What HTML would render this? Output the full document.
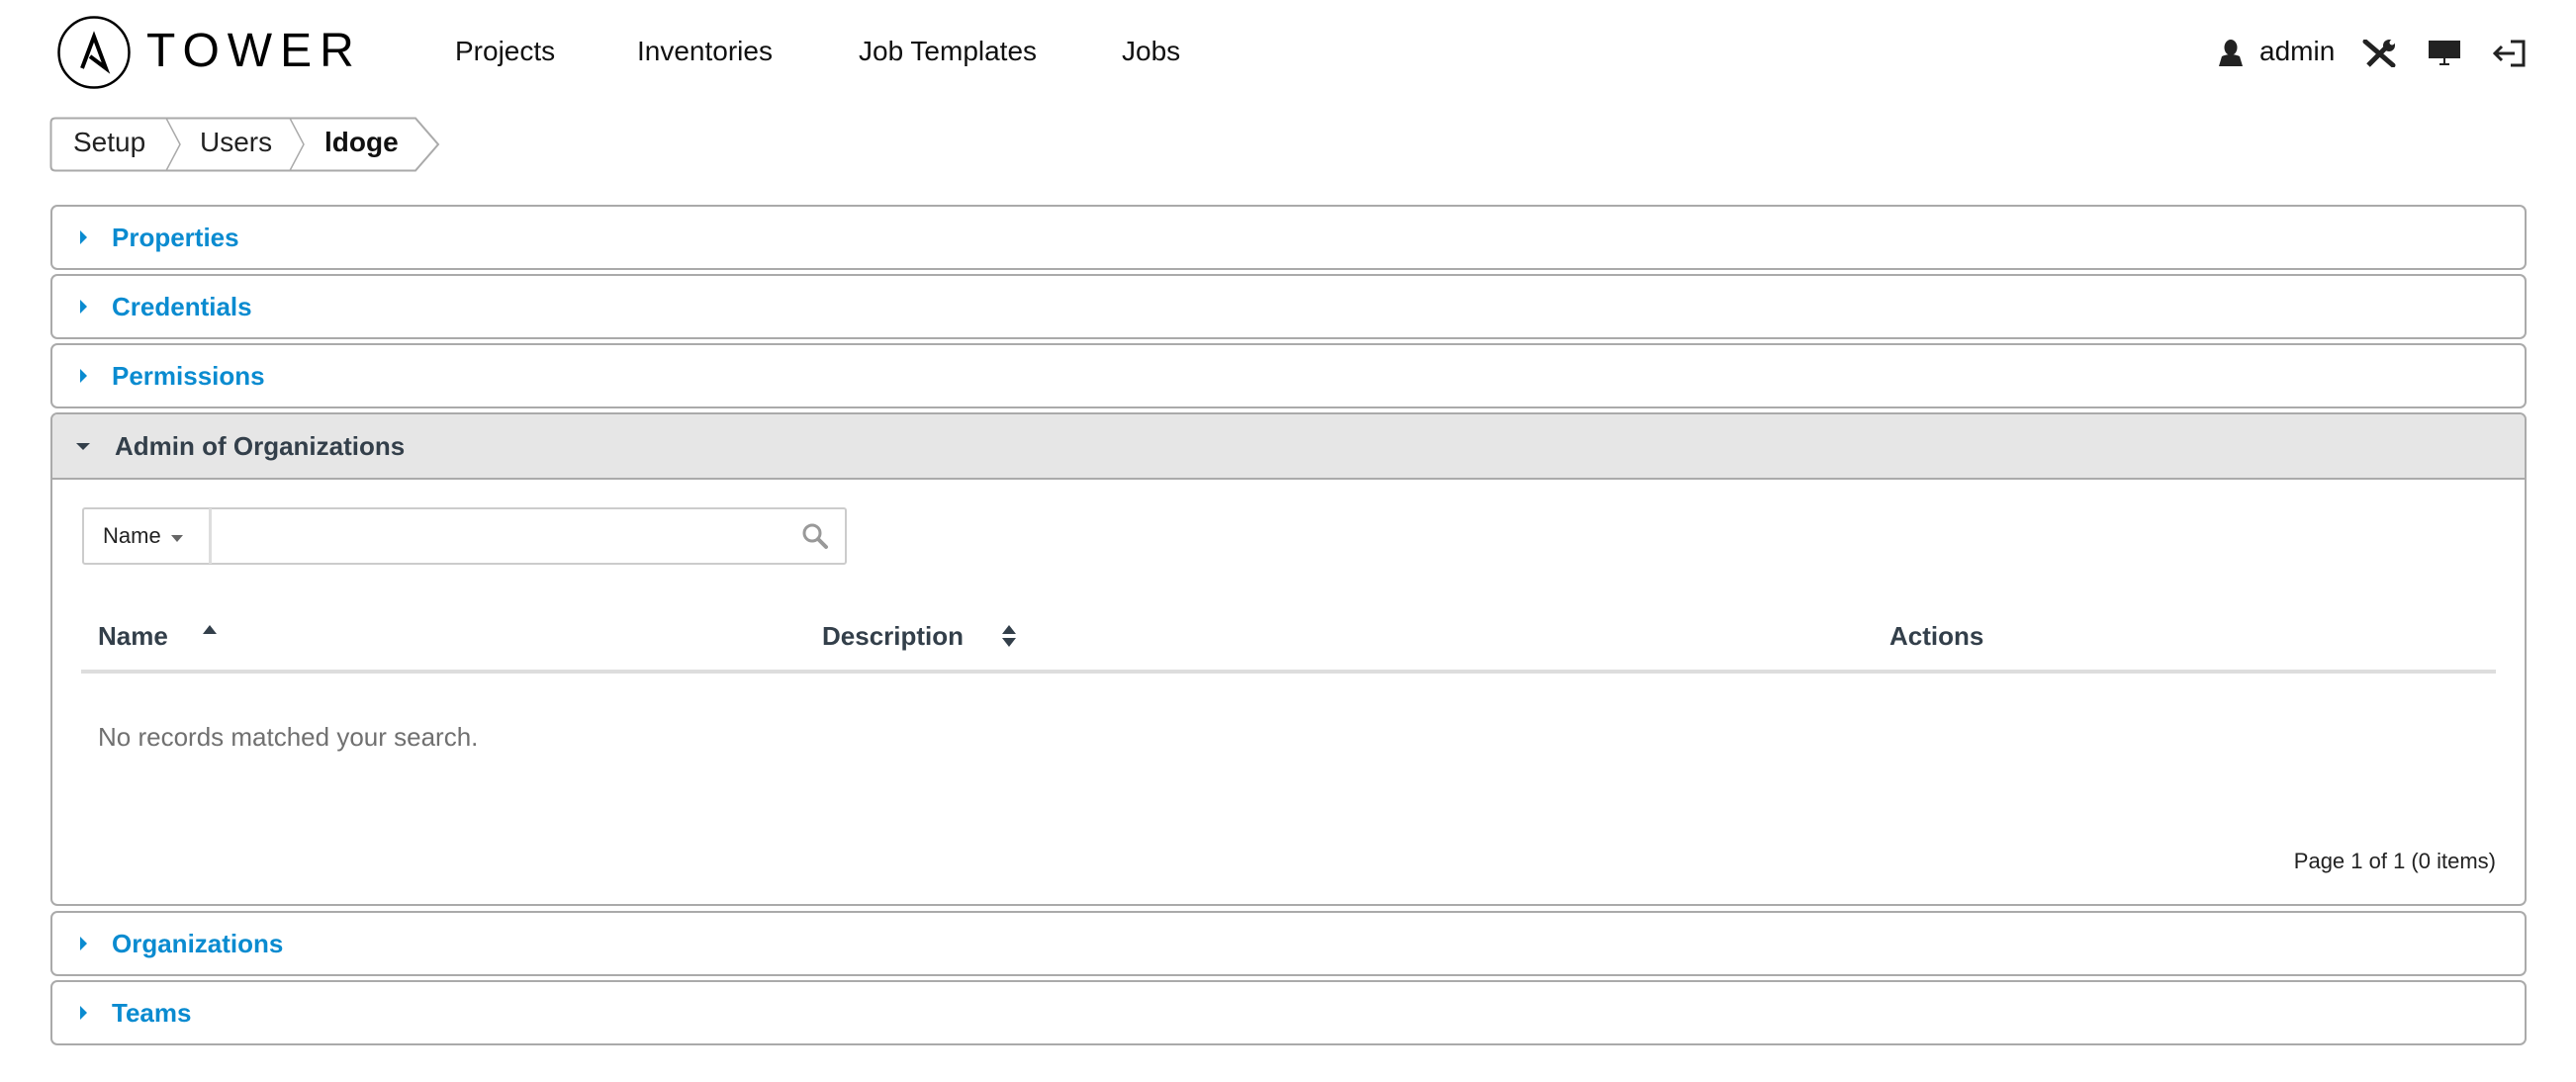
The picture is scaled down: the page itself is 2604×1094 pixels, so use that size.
<!DOCTYPE html>
<html><head><meta charset="utf-8"><style>
*{box-sizing:border-box;margin:0;padding:0}
body{width:2604px;height:1094px;background:#fff;font-family:"Liberation Sans",Arial,sans-serif;position:relative;overflow:hidden;color:#161b1f}
.abs{position:absolute}
.nav{position:absolute;top:36px;font-size:28px;color:#111;white-space:nowrap}
.panel{position:absolute;left:51px;width:2503px;border:2px solid #aaa;border-radius:7px;background:#fff}
.ph{height:62px;display:flex;align-items:center;font-weight:bold;font-size:26px;color:#0a8bd0}
.ph .tri{width:0;height:0;border-top:7px solid transparent;border-bottom:7px solid transparent;border-left:7px solid #0a8bd0;margin-left:28px;margin-right:25px}
.th{position:absolute;top:628px;font-size:26px;font-weight:bold;color:#333f4a}
</style></head><body>
<svg class="abs" style="left:57px;top:15px" width="76" height="76" viewBox="0 0 76 76"><circle cx="38" cy="38" r="35.5" fill="none" stroke="#000" stroke-width="2.5"/><path d="M26 54 L38 22 L50 54 L34 42" fill="none" stroke="#000" stroke-width="4" stroke-linejoin="miter"/></svg>
<div class="abs" style="left:148px;top:24px;font-size:48px;letter-spacing:8px;color:#000">TOWER</div>
<div class="nav" style="left:460px">Projects</div>
<div class="nav" style="left:644px">Inventories</div>
<div class="nav" style="left:868px">Job Templates</div>
<div class="nav" style="left:1134px">Jobs</div>
<svg class="abs" style="left:2242px;top:40px" width="26" height="27" viewBox="0 0 26 27"><ellipse cx="13" cy="8" rx="6.5" ry="8" fill="#222"/><path d="M4 17 Q13 13 22 17 L25 27 L1 27 Z" fill="#222"/></svg>
<div class="abs" style="left:2284px;top:36px;font-size:28px;color:#111">admin</div>
<svg class="abs" style="left:2386px;top:40px" width="38" height="28" viewBox="0 0 38 28"><path d="M5 2 L33 26" stroke="#222" stroke-width="5" stroke-linecap="round"/><path d="M8 26 L26 8" stroke="#222" stroke-width="5"/><circle cx="29" cy="6" r="6" fill="#222"/><circle cx="32" cy="3" r="2.5" fill="#fff"/></svg>
<svg class="abs" style="left:2455px;top:41px" width="34" height="26" viewBox="0 0 34 26"><rect x="0" y="0" width="32" height="18" fill="#222"/><rect x="15" y="18" width="2" height="6" fill="#222"/><rect x="11" y="23" width="10" height="2" fill="#222"/></svg>
<svg class="abs" style="left:2520px;top:40px" width="34" height="28" viewBox="0 0 34 28"><path d="M18 2 H31 V26 H18" fill="none" stroke="#222" stroke-width="3"/><path d="M2 14 H22" stroke="#222" stroke-width="3"/><path d="M9 7 L2 14 L9 21" fill="none" stroke="#222" stroke-width="3"/></svg>
<svg class="abs" style="left:50px;top:118px" width="400" height="56" viewBox="0 0 400 56"><path d="M6 1.5 H370 L393 28 L370 54.5 H6 Q1.5 54.5 1.5 50 V6 Q1.5 1.5 6 1.5 Z" fill="#fff" stroke="#aaa" stroke-width="2"/><path d="M118 1.5 L132 28 L118 54.5 M243 1.5 L257 28 L243 54.5" fill="none" stroke="#aaa" stroke-width="1.5"/></svg>
<div class="abs" style="left:74px;top:128px;font-size:28px;color:#222">Setup</div>
<div class="abs" style="left:202px;top:128px;font-size:28px;color:#222">Users</div>
<div class="abs" style="left:328px;top:128px;font-size:28px;color:#111;font-weight:bold">ldoge</div>
<div class="panel" style="top:207px;height:66px"><div class="ph"><span class="tri"></span>Properties</div></div>
<div class="panel" style="top:277px;height:66px"><div class="ph"><span class="tri"></span>Credentials</div></div>
<div class="panel" style="top:347px;height:66px"><div class="ph"><span class="tri"></span>Permissions</div></div>
<div class="panel" style="top:417px;height:499px;overflow:hidden">
 <div class="ph" style="background:#e6e6e6;color:#333f4a;height:66px;border-bottom:2px solid #aaa"><span class="tri" style="border-left:7px solid transparent;border-right:7px solid transparent;border-top:7px solid #333f4a;border-bottom:0;margin-left:24px;margin-right:25px"></span>Admin of Organizations</div>
</div>
<div class="abs" style="left:83px;top:513px;width:773px;height:58px;border:2px solid #ccc;border-radius:3px"></div>
<div class="abs" style="left:211px;top:514px;width:3px;height:56px;background:#ddd"></div>
<div class="abs" style="left:104px;top:529px;font-size:22px;color:#222">Name</div>
<div class="abs" style="left:173px;top:541px;width:0;height:0;border-left:6px solid transparent;border-right:6px solid transparent;border-top:7px solid #666"></div>
<svg class="abs" style="left:810px;top:528px" width="28" height="28" viewBox="0 0 28 28"><circle cx="11" cy="11" r="8" fill="none" stroke="#999" stroke-width="3"/><path d="M17 17 L25 25" stroke="#999" stroke-width="4" stroke-linecap="round"/></svg>
<div class="th" style="left:99px">Name</div>
<div class="abs" style="left:205px;top:632px;width:0;height:0;border-left:7px solid transparent;border-right:7px solid transparent;border-bottom:9px solid #333f4a"></div>
<div class="th" style="left:831px">Description</div>
<div class="abs" style="left:1013px;top:632px;width:0;height:0;border-left:7px solid transparent;border-right:7px solid transparent;border-bottom:9px solid #333f4a"></div>
<div class="abs" style="left:1013px;top:645px;width:0;height:0;border-left:7px solid transparent;border-right:7px solid transparent;border-top:9px solid #333f4a"></div>
<div class="th" style="left:1910px">Actions</div>
<div class="abs" style="left:82px;top:677px;width:2441px;height:4px;background:#ddd"></div>
<div class="abs" style="left:99px;top:730px;font-size:26px;color:#707070">No records matched your search.</div>
<div class="abs" style="right:81px;top:858px;font-size:22px;color:#222">Page 1 of 1 (0 items)</div>
<div class="panel" style="top:921px;height:66px"><div class="ph"><span class="tri"></span>Organizations</div></div>
<div class="panel" style="top:991px;height:66px"><div class="ph"><span class="tri"></span>Teams</div></div>
</body></html>
